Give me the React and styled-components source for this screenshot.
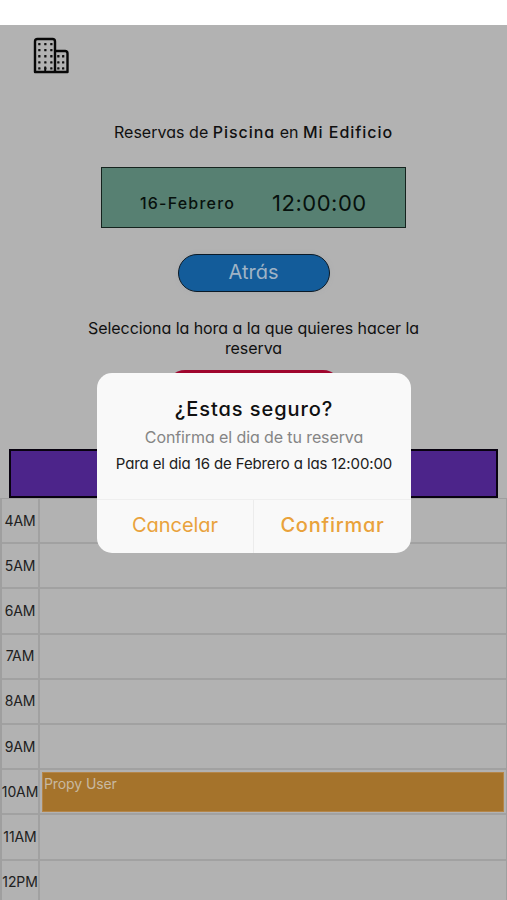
import React from "react";
import styled, { createGlobalStyle } from "styled-components";

const GlobalStyle = createGlobalStyle`
  * { box-sizing: border-box; }
  body {
    margin: 0;
    overflow: hidden;
    background: #fff;
    font-family: Inter, "Noto Sans", sans-serif;
    font-feature-settings: "cv11" 1;
  }
  p, h2 { margin: 0; }
`;

const Screen = styled.div`
  position: relative;
  height: 900px;
  overflow: hidden;
  padding-top: 25px;
`;

const Page = styled.main`
  height: 875px;
  background: #b2b2b2;
  display: flex;
  flex-direction: column;
  align-items: center;
  color: #101010;

  > * { flex: none; }
`;

const Header = styled.header`
  align-self: stretch;
  height: 97px;
  padding: 11px 0 0 32px;
`;

const Label = styled.span`
  display: block;
  white-space: nowrap;
  font-size: ${(p) => p.$size}px;
  line-height: ${(p) => p.$line || 20}px;
  font-weight: ${(p) => p.$weight || 400};
  letter-spacing: ${(p) => p.$track || 0}px;
  color: ${(p) => p.$color || "#101010"};
`;

const Strong = styled.b`
  font-weight: 500;
  letter-spacing: 0.95px;
`;

const Summary = styled.section`
  display: flex;
  align-items: center;
  width: 305px;
  height: 61px;
  margin-top: 25px;
  padding: 11px 0 0 38px;
  gap: 37px;
  background: #578072;
  border: 1.5px solid #15231e;
`;

const BackButton = styled.button`
  width: 152px;
  height: 38px;
  margin-top: 26px;
  padding: 0 0 2px;
  display: flex;
  align-items: center;
  justify-content: center;
  border: 1.5px solid #0b1a27;
  border-radius: 19px;
  background: #135c9a;
  font-family: inherit;
  font-feature-settings: inherit;
  box-shadow: 0 0 4px #a8aaac;
`;

const Prompt = styled.div`
  display: flex;
  flex-direction: column;
  align-items: center;
  margin-top: 26px;
`;

const RedButton = styled.div`
  width: 176px;
  height: 38px;
  margin-top: 12px;
  border-radius: 19px;
  background: #a0062e;
`;

const DayBar = styled.div`
  width: 489px;
  height: 49px;
  margin-top: 41px;
  border: 2px solid #080210;
  background: #4c248a;
`;

const Agenda = styled.div`
  align-self: stretch;
  border: solid #9f9f9f;
  border-width: 1px 1px 0 2px;
`;

const HourRow = styled.div`
  display: grid;
  grid-template-columns: 38px 1fr;
  height: 45.2px;
  border-bottom: 2px solid #a1a1a1;
`;

const HourCell = styled.div`
  display: flex;
  align-items: center;
  justify-content: center;
  border-right: 2px solid #a1a1a1;
`;

const Slot = styled.div`
  padding: 2px 2px 1px;
`;

const Booking = styled.div`
  height: 100%;
  padding: 1px;
  background: #a5732b;
  border: 1px solid #b58649;
`;

const Dialog = styled.div`
  position: absolute;
  top: 373px;
  left: 97px;
  width: 314px;
  height: 180px;
  border-radius: 15px;
  background: #f9f9f9;
  display: flex;
  flex-direction: column;
`;

const DialogBody = styled.div`
  height: 126px;
  padding-top: 24px;
  display: flex;
  flex-direction: column;
  align-items: center;
`;

const Actions = styled.div`
  flex: 1;
  display: grid;
  grid-template-columns: 157px 157px;
  border-top: 1px solid #efefef;
`;

const Action = styled.button`
  display: flex;
  align-items: center;
  justify-content: center;
  padding: 0 0 3px;
  border: 0;
  border-right: ${(p) => (p.$divided ? "1px solid #ececec" : "0")};
  background: none;
  font-family: inherit;
  font-feature-settings: inherit;
`;

const range = (n) => Array.from({ length: n }, (_, i) => i);

function Building() {
  return (
    <svg width="38" height="40" viewBox="0 0 38 40" fill="none" stroke="#080808">
      <path d="M3 36V5.500Q3 3 5.500 3h15Q23 3 23 5.500V36H3ZM23 15h10q2.500 0 2.500 2.500V36H23" strokeWidth="2.400" strokeLinejoin="round" />
      <path d="M13.200 36v-5.500" strokeWidth="1.800" />
      <g fill="#111" stroke="none">
        {range(5).map((r) => range(3).map((c) => (
          <rect key={`${r}-${c}`} x={6.2 + c * 6} y={6.9 + r * 6.1} width="2.300" height="2.300" rx=".5" />
        )))}
        {range(3).map((r) => range(2).map((c) => (
          <rect key={`${r}-${c}`} x={25.2 + c * 4.8} y={19.1 + r * 6.1} width="2.300" height="2.300" rx=".5" />
        )))}
      </g>
    </svg>
  );
}

const hours = ["4AM", "5AM", "6AM", "7AM", "8AM", "9AM", "10AM", "11AM", "12PM"];

export default function App() {
  return (
    <Screen>
      <GlobalStyle />
      <Page>
        <Header><Building /></Header>
        <Label as="p" $size={16} $track={0.03}>
          Reservas de <Strong>Piscina</Strong> en <Strong>Mi Edificio</Strong>
        </Label>
        <Summary>
          <Label $size={16} $weight={500} $track={1.2} $color="#07110d">16-Febrero</Label>
          <Label $size={22} $track={0.5} $color="#07110d">12:00:00</Label>
        </Summary>
        <BackButton><Label $size={20} $color="#9fb3c5">Atrás</Label></BackButton>
        <Prompt>
          <Label $size={16} $track={-0.06}>Selecciona la hora a la que quieres hacer la</Label>
          <Label $size={16} $track={-0.06}>reserva</Label>
        </Prompt>
        <RedButton />
        <DayBar />
        <Agenda>
          {hours.map((hour) => (
            <HourRow key={hour}>
              <HourCell><Label $size={14} $track={-0.1} $color="#202020">{hour}</Label></HourCell>
              <Slot>
                {hour === "10AM" && (
                  <Booking><Label $size={14} $track={-0.1} $color="#c8b9a1">Propy User</Label></Booking>
                )}
              </Slot>
            </HourRow>
          ))}
        </Agenda>
      </Page>
      <Dialog role="dialog">
        <DialogBody>
          <Label as="h2" $size={20} $line={24} $weight={500} $track={0.95}>¿Estas seguro?</Label>
          <Label $size={16} $line={32} $track={-0.1} $color="#858585">Confirma el dia de tu reserva</Label>
          <Label $size={15} $line={22} $track={-0.12} $color="#202020">Para el dia 16 de Febrero a las 12:00:00</Label>
        </DialogBody>
        <Actions>
          <Action $divided><Label $size={20} $track={-0.05} $color="#e9a23b">Cancelar</Label></Action>
          <Action><Label $size={20} $weight={500} $track={0.75} $color="#e9a23b">Confirmar</Label></Action>
        </Actions>
      </Dialog>
    </Screen>
  );
}
